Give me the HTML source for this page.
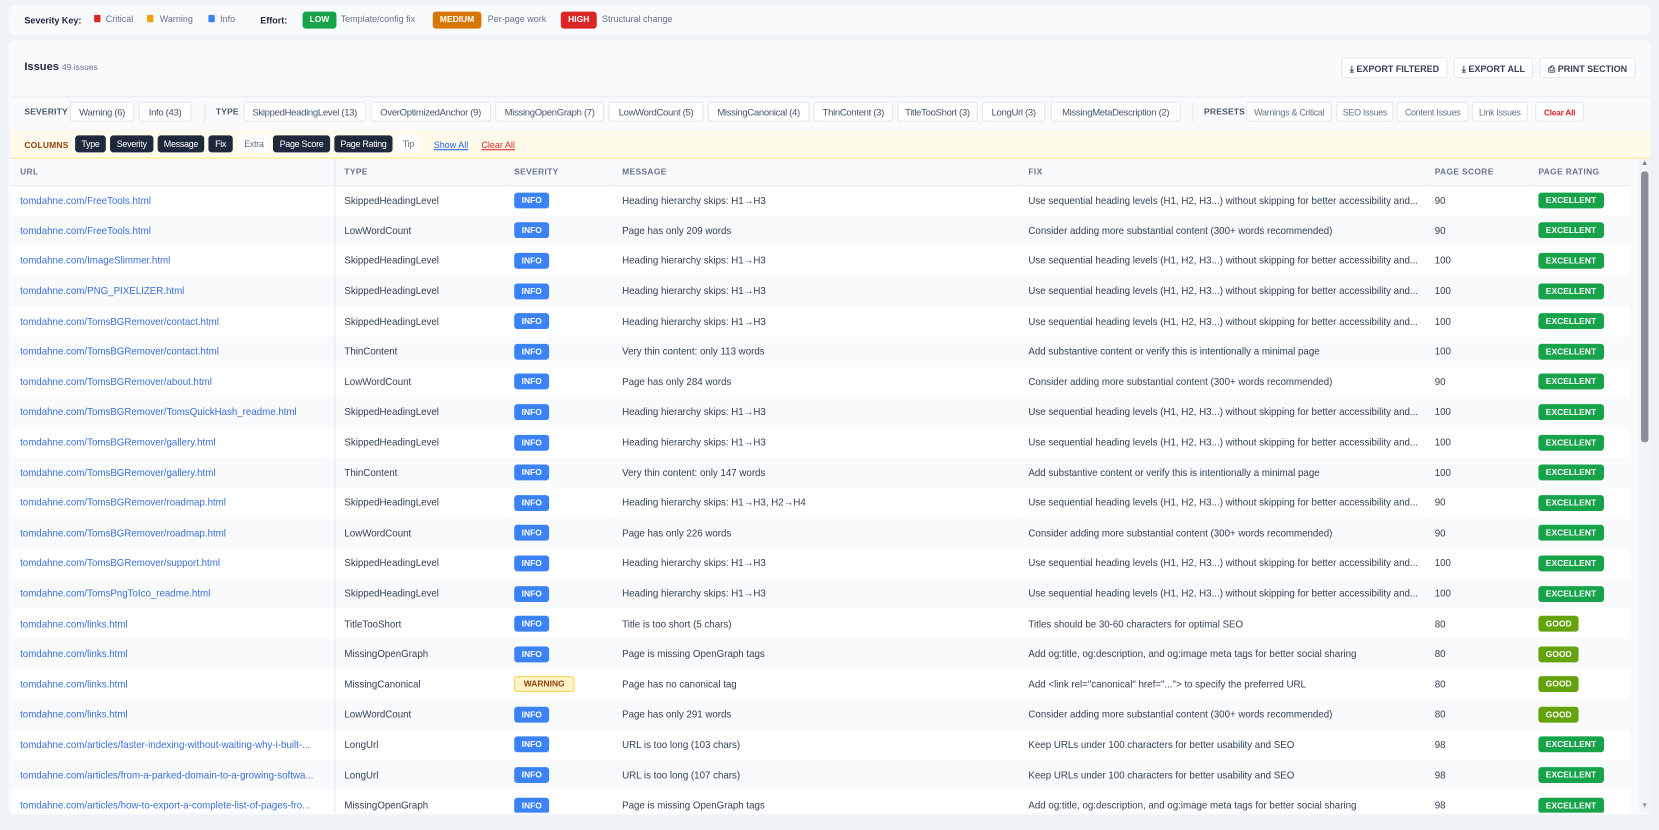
<!DOCTYPE html>
<html><head><meta charset="utf-8"><style>
*{box-sizing:border-box;margin:0;padding:0}
html,body{width:1659px;height:829px;overflow:hidden}
body{background:#eef2f6;font-family:"Liberation Sans",sans-serif;color:#334155}
#w{position:absolute;left:0;top:0;width:1568px;height:784px;transform:scale(1.05804);transform-origin:0 0}
.abs{position:absolute}
.card{position:absolute;background:#f8fafc;border-radius:6px}
.chip{position:absolute;height:19px;line-height:19px;text-align:center;font-size:9px;color:#475569;background:#fff;border:1px solid #e2e8f0;border-radius:3px;white-space:nowrap;letter-spacing:-0.3px}
.pre{color:#64748b;font-size:8.5px}
.lab{position:absolute;font-size:8px;font-weight:bold;color:#475569;letter-spacing:.2px}
.cchip{position:absolute;top:128px;height:16px;line-height:16px;text-align:center;font-size:8.5px;color:#fff;background:#1e293b;border-radius:3px;letter-spacing:-0.3px;white-space:nowrap}
.btn{position:absolute;top:54px;height:20px;line-height:20px;background:#fff;border:1px solid #e2e8f0;border-radius:3px;font-size:8.5px;font-weight:bold;color:#334155;text-align:center;white-space:nowrap}
table{position:absolute;left:0;top:0;width:1530px;border-collapse:collapse;font-size:9.2px;table-layout:fixed}
th{height:25px;text-align:left;font-size:8px;color:#64748b;font-weight:bold;letter-spacing:.3px;border-bottom:1px solid #e2e8f0;padding-left:9px;background:#f8fafc}
td{height:28.6px;padding-left:9px;white-space:nowrap;overflow:hidden;color:#334155}
tr.o td{background:#fff}
tr.e td{background:#f8fafc}
td.u{color:#3b6fd6}
.b{display:inline-block;height:15px;line-height:15px;padding:0 7px;border-radius:3px;font-size:8px;font-weight:bold;color:#fff}
.i{background:#3b82f6}
.w{background:#fef3c7;color:#92400e;border:1px solid #fcd34d;line-height:13px;padding:0 8px}
.x{background:#16a34a}
.g{background:#65a30d}
.c1{border-right:1px solid #e2e8f0}
</style></head><body><div id="w">
<div class="card" style="left:8px;top:5px;width:1552px;height:28px"></div>
<div class="abs" style="left:23px;top:14px;font-size:8.5px;font-weight:bold;color:#1e293b">Severity Key:</div>
<div class="abs" style="left:89px;top:14px;width:6px;height:7px;background:#dc2626;border-radius:1px"></div><div class="abs" style="left:100px;top:13px;font-size:8.5px;color:#64748b">Critical</div>
<div class="abs" style="left:139px;top:14px;width:6px;height:7px;background:#f59e0b;border-radius:1px"></div><div class="abs" style="left:151px;top:13px;font-size:8.5px;color:#64748b">Warning</div>
<div class="abs" style="left:197px;top:14px;width:6px;height:7px;background:#3b82f6;border-radius:1px"></div><div class="abs" style="left:208px;top:13px;font-size:8.5px;color:#64748b">Info</div>
<div class="abs" style="left:246px;top:14px;font-size:8.5px;font-weight:bold;color:#1e293b">Effort:</div>
<div class="abs" style="left:286px;top:11px;width:32px;height:16px;line-height:16px;background:#16a34a;color:#fff;font-size:8px;font-weight:bold;text-align:center;border-radius:3px">LOW</div>
<div class="abs" style="left:322px;top:13px;font-size:8.5px;color:#64748b">Template/config fix</div>
<div class="abs" style="left:409px;top:11px;width:46px;height:16px;line-height:16px;background:#d97706;color:#fff;font-size:8px;font-weight:bold;text-align:center;border-radius:3px">MEDIUM</div>
<div class="abs" style="left:461px;top:13px;font-size:8.5px;color:#64748b">Per-page work</div>
<div class="abs" style="left:530px;top:11px;width:34px;height:16px;line-height:16px;background:#dc2626;color:#fff;font-size:8px;font-weight:bold;text-align:center;border-radius:3px">HIGH</div>
<div class="abs" style="left:569px;top:13px;font-size:8.5px;color:#64748b">Structural change</div>

<div class="card" style="left:8px;top:38px;width:1552px;height:732px"></div>
<div class="abs" style="left:23px;top:57px;font-size:10.5px;font-weight:bold;color:#1e293b">Issues <span style="font-size:8px;font-weight:normal;color:#64748b">49 issues</span></div>
<div class="btn" style="left:1268px;width:100px">⤓ EXPORT FILTERED</div>
<div class="btn" style="left:1374px;width:75px">⤓ EXPORT ALL</div>
<div class="btn" style="left:1455px;width:91px">⎙ PRINT SECTION</div>
<div class="abs" style="left:10px;top:91px;width:1550px;height:1px;background:#e9eef4"></div>

<div class="lab" style="left:23px;top:101px">SEVERITY</div>
<div class="chip" style="left:66px;top:96px;width:61px">Warning (6)</div>
<div class="chip" style="left:131px;top:96px;width:50px">Info (43)</div>
<div class="abs" style="left:193px;top:97px;width:1px;height:18px;background:#e2e8f0"></div>
<div class="lab" style="left:204px;top:101px">TYPE</div>
<div class="chip" style="left:230px;top:96px;width:116px">SkippedHeadingLevel (13)</div>
<div class="chip" style="left:350px;top:96px;width:114px">OverOptimizedAnchor (9)</div>
<div class="chip" style="left:468px;top:96px;width:103px">MissingOpenGraph (7)</div>
<div class="chip" style="left:575px;top:96px;width:90px">LowWordCount (5)</div>
<div class="chip" style="left:669px;top:96px;width:96px">MissingCanonical (4)</div>
<div class="chip" style="left:769px;top:96px;width:75px">ThinContent (3)</div>
<div class="chip" style="left:848px;top:96px;width:76px">TitleTooShort (3)</div>
<div class="chip" style="left:928px;top:96px;width:60px">LongUrl (3)</div>
<div class="chip" style="left:993px;top:96px;width:123px">MissingMetaDescription (2)</div>
<div class="abs" style="left:1127px;top:97px;width:1px;height:18px;background:#e2e8f0"></div>
<div class="lab" style="left:1138px;top:101px">PRESETS</div>
<div class="chip pre" style="left:1178px;top:96px;width:81px">Warnings &amp; Critical</div>
<div class="chip pre" style="left:1263px;top:96px;width:54px">SEO Issues</div>
<div class="chip pre" style="left:1320px;top:96px;width:68px">Content Issues</div>
<div class="chip pre" style="left:1391px;top:96px;width:53px">Link Issues</div>
<div class="chip" style="left:1451px;top:96px;width:46px;color:#dc2626;font-weight:bold;font-size:8px">Clear All</div>

<div class="abs" style="left:10px;top:123px;width:1550px;height:27px;background:#fefbea;border-bottom:1px solid #fde68a"></div>
<div class="lab" style="left:23px;top:133px;color:#92400e">COLUMNS</div>
<div class="cchip" style="left:71px;width:29px">Type</div>
<div class="cchip" style="left:104px;width:41px">Severity</div>
<div class="cchip" style="left:149px;width:44px">Message</div>
<div class="cchip" style="left:197px;width:23px">Fix</div>
<div class="cchip" style="left:224px;width:32px;background:#fff;color:#64748b">Extra</div>
<div class="cchip" style="left:258px;width:54px">Page Score</div>
<div class="cchip" style="left:316px;width:55px">Page Rating</div>
<div class="cchip" style="left:375px;width:22px;background:#fff;color:#64748b">Tip</div>
<div class="abs" style="left:410px;top:132px;font-size:8.5px;color:#2563eb;text-decoration:underline">Show All</div>
<div class="abs" style="left:455px;top:132px;font-size:8.5px;color:#dc2626;text-decoration:underline">Clear All</div>

<div class="abs" style="left:1549px;top:150px;width:11px;height:618px;background:#f1f5f9"></div>
<div class="abs" style="left:1551px;top:162px;width:7px;height:256px;background:#8a8f96;border-radius:3px"></div>
<div class="abs" style="left:1551px;top:151px;font-size:7px;color:#777">▲</div>
<div class="abs" style="left:1551px;top:758px;font-size:7px;color:#999">▼</div>

<div class="abs" style="left:10px;top:150px;width:1539px;height:618px;overflow:hidden">
<table>
<colgroup><col style="width:306px"><col style="width:161px"><col style="width:102px"><col style="width:384px"><col style="width:384px"><col style="width:98px"><col></colgroup>
<tr><th class="c1">URL</th><th>TYPE</th><th>SEVERITY</th><th>MESSAGE</th><th>FIX</th><th>PAGE SCORE</th><th>PAGE RATING</th></tr>
<tr class="o"><td class="u c1">tomdahne.com/FreeTools.html</td><td>SkippedHeadingLevel</td><td><span class="b i">INFO</span></td><td>Heading hierarchy skips: H1→H3</td><td>Use sequential heading levels (H1, H2, H3...) without skipping for better accessibility and...</td><td>90</td><td><span class="b x">EXCELLENT</span></td></tr>
<tr class="e"><td class="u c1">tomdahne.com/FreeTools.html</td><td>LowWordCount</td><td><span class="b i">INFO</span></td><td>Page has only 209 words</td><td>Consider adding more substantial content (300+ words recommended)</td><td>90</td><td><span class="b x">EXCELLENT</span></td></tr>
<tr class="o"><td class="u c1">tomdahne.com/ImageSlimmer.html</td><td>SkippedHeadingLevel</td><td><span class="b i">INFO</span></td><td>Heading hierarchy skips: H1→H3</td><td>Use sequential heading levels (H1, H2, H3...) without skipping for better accessibility and...</td><td>100</td><td><span class="b x">EXCELLENT</span></td></tr>
<tr class="e"><td class="u c1">tomdahne.com/PNG_PIXELIZER.html</td><td>SkippedHeadingLevel</td><td><span class="b i">INFO</span></td><td>Heading hierarchy skips: H1→H3</td><td>Use sequential heading levels (H1, H2, H3...) without skipping for better accessibility and...</td><td>100</td><td><span class="b x">EXCELLENT</span></td></tr>
<tr class="o"><td class="u c1">tomdahne.com/TomsBGRemover/contact.html</td><td>SkippedHeadingLevel</td><td><span class="b i">INFO</span></td><td>Heading hierarchy skips: H1→H3</td><td>Use sequential heading levels (H1, H2, H3...) without skipping for better accessibility and...</td><td>100</td><td><span class="b x">EXCELLENT</span></td></tr>
<tr class="e"><td class="u c1">tomdahne.com/TomsBGRemover/contact.html</td><td>ThinContent</td><td><span class="b i">INFO</span></td><td>Very thin content: only 113 words</td><td>Add substantive content or verify this is intentionally a minimal page</td><td>100</td><td><span class="b x">EXCELLENT</span></td></tr>
<tr class="o"><td class="u c1">tomdahne.com/TomsBGRemover/about.html</td><td>LowWordCount</td><td><span class="b i">INFO</span></td><td>Page has only 284 words</td><td>Consider adding more substantial content (300+ words recommended)</td><td>90</td><td><span class="b x">EXCELLENT</span></td></tr>
<tr class="e"><td class="u c1">tomdahne.com/TomsBGRemover/TomsQuickHash_readme.html</td><td>SkippedHeadingLevel</td><td><span class="b i">INFO</span></td><td>Heading hierarchy skips: H1→H3</td><td>Use sequential heading levels (H1, H2, H3...) without skipping for better accessibility and...</td><td>100</td><td><span class="b x">EXCELLENT</span></td></tr>
<tr class="o"><td class="u c1">tomdahne.com/TomsBGRemover/gallery.html</td><td>SkippedHeadingLevel</td><td><span class="b i">INFO</span></td><td>Heading hierarchy skips: H1→H3</td><td>Use sequential heading levels (H1, H2, H3...) without skipping for better accessibility and...</td><td>100</td><td><span class="b x">EXCELLENT</span></td></tr>
<tr class="e"><td class="u c1">tomdahne.com/TomsBGRemover/gallery.html</td><td>ThinContent</td><td><span class="b i">INFO</span></td><td>Very thin content: only 147 words</td><td>Add substantive content or verify this is intentionally a minimal page</td><td>100</td><td><span class="b x">EXCELLENT</span></td></tr>
<tr class="o"><td class="u c1">tomdahne.com/TomsBGRemover/roadmap.html</td><td>SkippedHeadingLevel</td><td><span class="b i">INFO</span></td><td>Heading hierarchy skips: H1→H3, H2→H4</td><td>Use sequential heading levels (H1, H2, H3...) without skipping for better accessibility and...</td><td>90</td><td><span class="b x">EXCELLENT</span></td></tr>
<tr class="e"><td class="u c1">tomdahne.com/TomsBGRemover/roadmap.html</td><td>LowWordCount</td><td><span class="b i">INFO</span></td><td>Page has only 226 words</td><td>Consider adding more substantial content (300+ words recommended)</td><td>90</td><td><span class="b x">EXCELLENT</span></td></tr>
<tr class="o"><td class="u c1">tomdahne.com/TomsBGRemover/support.html</td><td>SkippedHeadingLevel</td><td><span class="b i">INFO</span></td><td>Heading hierarchy skips: H1→H3</td><td>Use sequential heading levels (H1, H2, H3...) without skipping for better accessibility and...</td><td>100</td><td><span class="b x">EXCELLENT</span></td></tr>
<tr class="e"><td class="u c1">tomdahne.com/TomsPngToIco_readme.html</td><td>SkippedHeadingLevel</td><td><span class="b i">INFO</span></td><td>Heading hierarchy skips: H1→H3</td><td>Use sequential heading levels (H1, H2, H3...) without skipping for better accessibility and...</td><td>100</td><td><span class="b x">EXCELLENT</span></td></tr>
<tr class="o"><td class="u c1">tomdahne.com/links.html</td><td>TitleTooShort</td><td><span class="b i">INFO</span></td><td>Title is too short (5 chars)</td><td>Titles should be 30-60 characters for optimal SEO</td><td>80</td><td><span class="b g">GOOD</span></td></tr>
<tr class="e"><td class="u c1">tomdahne.com/links.html</td><td>MissingOpenGraph</td><td><span class="b i">INFO</span></td><td>Page is missing OpenGraph tags</td><td>Add og:title, og:description, and og:image meta tags for better social sharing</td><td>80</td><td><span class="b g">GOOD</span></td></tr>
<tr class="o"><td class="u c1">tomdahne.com/links.html</td><td>MissingCanonical</td><td><span class="b w">WARNING</span></td><td>Page has no canonical tag</td><td>Add &lt;link rel="canonical" href="..."&gt; to specify the preferred URL</td><td>80</td><td><span class="b g">GOOD</span></td></tr>
<tr class="e"><td class="u c1">tomdahne.com/links.html</td><td>LowWordCount</td><td><span class="b i">INFO</span></td><td>Page has only 291 words</td><td>Consider adding more substantial content (300+ words recommended)</td><td>80</td><td><span class="b g">GOOD</span></td></tr>
<tr class="o"><td class="u c1">tomdahne.com/articles/faster-indexing-without-waiting-why-i-built-...</td><td>LongUrl</td><td><span class="b i">INFO</span></td><td>URL is too long (103 chars)</td><td>Keep URLs under 100 characters for better usability and SEO</td><td>98</td><td><span class="b x">EXCELLENT</span></td></tr>
<tr class="e"><td class="u c1">tomdahne.com/articles/from-a-parked-domain-to-a-growing-softwa...</td><td>LongUrl</td><td><span class="b i">INFO</span></td><td>URL is too long (107 chars)</td><td>Keep URLs under 100 characters for better usability and SEO</td><td>98</td><td><span class="b x">EXCELLENT</span></td></tr>
<tr class="o"><td class="u c1">tomdahne.com/articles/how-to-export-a-complete-list-of-pages-fro...</td><td>MissingOpenGraph</td><td><span class="b i">INFO</span></td><td>Page is missing OpenGraph tags</td><td>Add og:title, og:description, and og:image meta tags for better social sharing</td><td>98</td><td><span class="b x">EXCELLENT</span></td></tr>
</table>
</div>
</div></body></html>
